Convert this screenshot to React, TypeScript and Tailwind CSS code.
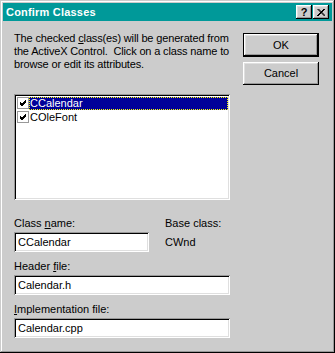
import React from 'react';

const raised =
  'shadow-[inset_-1px_-1px_0_#000,inset_1px_1px_0_#fff,inset_-2px_-2px_0_#999,inset_2px_2px_0_#dfdfdf]';
const sunken =
  'shadow-[inset_1px_1px_0_#999,inset_-1px_-1px_0_#fff,inset_2px_2px_0_#000,inset_-2px_-2px_0_#dfdfdf]';

function U({ children }: { children: React.ReactNode }) {
  return <span className="underline underline-offset-[1px]">{children}</span>;
}

function Check() {
  return (
    <div className="w-[12px] h-[12px] border border-[#999] bg-white flex items-center justify-center shrink-0">
      <svg width="8" height="8" viewBox="0 0 8 8">
        <path d="M1 3 L3 5 L7 1 M1 4 L3 6 L7 2 M1 5 L3 7 L7 3" stroke="#000" strokeWidth="1" fill="none" shapeRendering="crispEdges" />
      </svg>
    </div>
  );
}

function Field({ value, width }: { value: string; width: string }) {
  return (
    <div className={`${width} h-[20px] bg-white ${sunken} flex items-center pl-[4px]`}>
      <span className="leading-[13px]">{value}</span>
    </div>
  );
}

export default function App() {
  return (
    <div
      className={`w-[335px] h-[353px] bg-[#cccccc] p-[3px] flex flex-col text-[11px] leading-[13px] text-black shadow-[inset_-1px_-1px_0_#000,inset_1px_1px_0_#cccccc,inset_-2px_-2px_0_#999,inset_2px_2px_0_#fff]`}
      style={{ fontFamily: '"Liberation Sans", Arial, sans-serif' }}
    >
      {/* title bar */}
      <div className="h-[18px] bg-[#009999] flex items-center justify-between pl-[3px] pr-[3px]">
        <span className="text-white font-bold text-[11px] tracking-[0.2px]">Confirm Classes</span>
        <div className="flex gap-[1px]">
          <div className={`w-[16px] h-[14px] bg-[#cccccc] ${raised} flex items-center justify-center font-bold text-[11px] leading-none`}>
            ?
          </div>
          <div className={`w-[16px] h-[14px] bg-[#cccccc] ${raised} flex items-center justify-center`}>
            <svg width="8" height="7" viewBox="0 0 8 7">
              <path d="M0.5 0 L7.5 7 M1.5 0 L8.5 7 M7 0 L0 7 M8 0 L1 7" stroke="#000" strokeWidth="1" fill="none" />
            </svg>
          </div>
        </div>
      </div>

      {/* body */}
      <div className="flex pl-[11px] pt-[11px]">
        <div className="w-[216px] flex flex-col">
          <p className="whitespace-nowrap tracking-[-0.15px]">
            The checked <U>c</U>lass(es) will be generated from
            <br />
            the ActiveX Control.&nbsp; Click on a class name to
            <br />
            browse or edit its attributes.
          </p>

          <div className={`mt-[23px] h-[106px] bg-white ${sunken} p-[2px] flex flex-col`}>
            <div className="h-[14px] flex items-center">
              <div className="pl-[1px] pr-[0px]"><Check /></div>
              <div className="flex-1 h-[13px] bg-[#000099] text-white outline outline-1 outline-dotted outline-[#ffff00] -outline-offset-1 pl-[1px] leading-[13px]">
                CCalendar
              </div>
            </div>
            <div className="h-[14px] flex items-center">
              <div className="pl-[1px]"><Check /></div>
              <div className="flex-1 pl-[1px] leading-[13px]">COleFont</div>
            </div>
          </div>

          <div className="mt-[17px] flex">
            <div className="w-[151px] flex flex-col">
              <span>Class <U>n</U>ame:</span>
              <div className="mt-[2px]"><Field value="CCalendar" width="w-[135px]" /></div>
            </div>
            <div className="flex flex-col">
              <span>Base class:</span>
              <span className="mt-[6px]">CWnd</span>
            </div>
          </div>

          <span className="mt-[8px]">Header <U>f</U>ile:</span>
          <div className="mt-[2px]"><Field value="Calendar.h" width="w-[216px]" /></div>

          <span className="mt-[8px]"><U>I</U>mplementation file:</span>
          <div className="mt-[2px]"><Field value="Calendar.cpp" width="w-[216px]" /></div>
        </div>

        <div className="ml-[13px] pt-[1px] flex flex-col gap-[5px]">
          <div className="w-[76px] h-[24px] border border-black">
            <div className={`w-full h-full bg-[#cccccc] ${raised} flex items-center justify-center`}>OK</div>
          </div>
          <div className={`w-[76px] h-[23px] bg-[#cccccc] ${raised} flex items-center justify-center`}>Cancel</div>
        </div>
      </div>
    </div>
  );
}
